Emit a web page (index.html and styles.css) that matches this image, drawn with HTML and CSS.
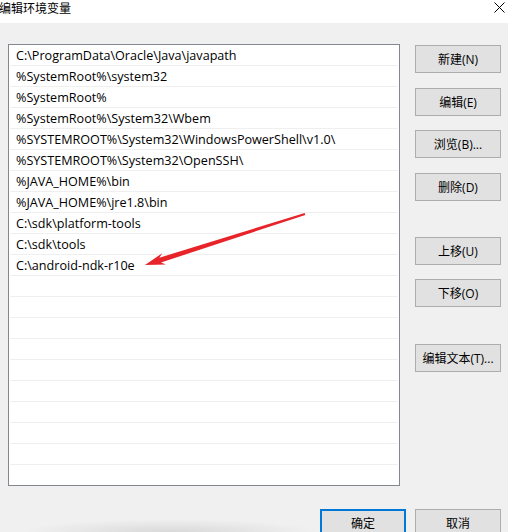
FILE: index.html
```html
<!DOCTYPE html>
<html lang="zh-CN">
<head>
<meta charset="utf-8">
<title>编辑环境变量</title>
<link rel="stylesheet" href="styles.css">
</head>
<body>
<div class="dialog">
  <div class="titlebar">
    <span class="title">编辑环境变量</span>
    <svg class="close" width="11" height="11" viewBox="0 0 11 11"><path d="M0.5 0.5 L10.5 10.5 M10.5 0.5 L0.5 10.5" stroke="#000" stroke-width="1" fill="none"/></svg>
  </div>
  <div class="main">
    <div class="listbox">
      <div class="row">C:\ProgramData\Oracle\Java\javapath</div>
      <div class="row">%SystemRoot%\system32</div>
      <div class="row">%SystemRoot%</div>
      <div class="row">%SystemRoot%\System32\Wbem</div>
      <div class="row">%SYSTEMROOT%\System32\WindowsPowerShell\v1.0\</div>
      <div class="row">%SYSTEMROOT%\System32\OpenSSH\</div>
      <div class="row">%JAVA_HOME%\bin</div>
      <div class="row">%JAVA_HOME%\jre1.8\bin</div>
      <div class="row">C:\sdk\platform-tools</div>
      <div class="row">C:\sdk\tools</div>
      <div class="row">C:\android-ndk-r10e</div>
      <div class="row"></div>
      <div class="row"></div>
      <div class="row"></div>
      <div class="row"></div>
      <div class="row"></div>
      <div class="row"></div>
      <div class="row"></div>
      <div class="row"></div>
      <div class="row"></div>
      <div class="row last"></div>
      <svg class="arrow" width="392" height="442" viewBox="8 44 392 442">
        <polygon fill="#e8242b" points="145,265 165.9,264.6 161,262.5 305.3,214.9 304.7,212.9 159.4,257.7 162.2,253.2"/>
      </svg>
    </div>
    <div class="buttons">
      <div class="btn">新建(N)</div>
      <div class="btn">编辑(E)</div>
      <div class="btn">浏览(B)...</div>
      <div class="btn">删除(D)</div>
      <div class="btn spaced">上移(U)</div>
      <div class="btn">下移(O)</div>
      <div class="btn spaced">编辑文本(T)...</div>
    </div>
  </div>
  <div class="footer">
    <div class="btn default">确定</div>
    <div class="btn">取消</div>
  </div>
</div>
</body>
</html>
```
FILE: styles.css
```css
html, body {
  margin: 0;
  padding: 0;
  width: 508px;
  height: 532px;
  overflow: hidden;
  background: #f0f0f0;
}
body {
  font-family: "Open Sans", "Noto Sans CJK SC", sans-serif;
  font-size: 12px;
  color: #000;
}
.dialog {
  display: flex;
  flex-direction: column;
  height: 532px;
  overflow: hidden;
}
.dialog > * {
  flex-shrink: 0;
}
.titlebar {
  height: 23px;
  background: #fff;
  display: flex;
  justify-content: space-between;
  align-items: flex-start;
}
.title {
  font-family: "Noto Sans CJK SC", sans-serif;
  font-size: 12px;
  line-height: 16px;
  margin-left: -1px;
}
.close {
  margin-top: 2px;
  margin-right: 3px;
}
.main {
  display: flex;
  padding: 21px 0 0 8px;
  gap: 15px;
}
.listbox {
  position: relative;
  box-sizing: border-box;
  width: 392px;
  height: 442px;
  border: 1px solid #828790;
  background: #fff;
  padding: 0 1px;
  overflow: hidden;
}
.row {
  box-sizing: border-box;
  height: 21px;
  border-bottom: 1px solid #efefef;
  padding: 1px 0 0 6px;
  font-size: 12.6px;
  line-height: 20px;
  white-space: nowrap;
}
.row.last {
  border-bottom: none;
}
.arrow {
  position: absolute;
  left: -1px;
  top: -1px;
}
.buttons {
  display: flex;
  flex-direction: column;
  gap: 14.5px;
  padding-top: 1px;
}
.btn {
  box-sizing: border-box;
  width: 86px;
  height: 28px;
  background: #e1e1e1;
  border: 1px solid #adadad;
  display: flex;
  align-items: center;
  justify-content: center;
  white-space: nowrap;
  flex-shrink: 0;
}
.btn.spaced {
  margin-top: 21.8px;
}
.footer {
  display: flex;
  justify-content: flex-end;
  gap: 9px;
  padding-right: 7px;
  margin-top: 23px;
  height: 30px;
  background: radial-gradient(ellipse 150px 14px at 170px 24px, rgba(0,0,0,0.10), rgba(0,0,0,0) 100%);
}
.btn.default {
  border: 2px solid #0078d7;
}
```
